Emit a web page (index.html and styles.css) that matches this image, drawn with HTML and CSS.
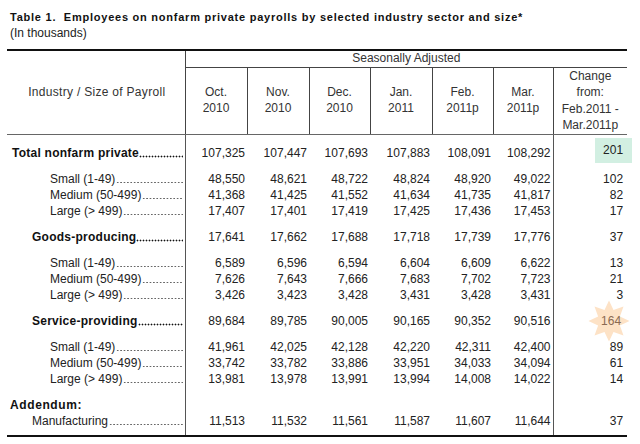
FILE: index.html
```html
<!DOCTYPE html>
<html>
<head>
<meta charset="utf-8">
<link rel="stylesheet" href="styles.css">
</head>
<body>
<div class="page">
  <h1 class="title">Table 1.&nbsp; Employees on nonfarm private payrolls by selected industry sector and size*</h1>
  <p class="sub">(In thousands)</p>
  <table class="data">
    <colgroup>
      <col class="c-label"><col class="c-62"><col class="c-62"><col class="c-61"><col class="c-62"><col class="c-61"><col class="c-60"><col class="c-chg">
    </colgroup>
    <thead>
      <tr class="h1">
        <th rowspan="2" class="lab-h">Industry / Size of Payroll</th>
        <th colspan="7" class="sa">Seasonally Adjusted</th>
      </tr>
      <tr class="h2">
        <th>Oct.<br>2010</th><th>Nov.<br>2010</th><th>Dec.<br>2010</th><th>Jan.<br>2011</th><th>Feb.<br>2011p</th><th>Mar.<br>2011p</th>
        <th class="chg">Change<br>from:<br>Feb.2011 -<br>Mar.2011p</th>
      </tr>
    </thead>
    <tbody>
      <tr class="gap"><td class="lab b l0"><span class="lw"><span>Total nonfarm private</span><span class="lead lead-b"></span></span></td><td>107,325</td><td>107,447</td><td>107,693</td><td>107,883</td><td>108,091</td><td class="last">108,292</td><td class="chg"><span class="hl-green">201</span></td></tr>
      <tr class="gap"><td class="lab l2"><span class="lw"><span>Small (1-49)</span><span class="lead"></span></span></td><td>48,550</td><td>48,621</td><td>48,722</td><td>48,824</td><td>48,920</td><td class="last">49,022</td><td class="chg">102</td></tr>
      <tr><td class="lab l2"><span class="lw"><span>Medium (50-499)</span><span class="lead"></span></span></td><td>41,368</td><td>41,425</td><td>41,552</td><td>41,634</td><td>41,735</td><td class="last">41,817</td><td class="chg">82</td></tr>
      <tr><td class="lab l2"><span class="lw"><span>Large (&gt; 499)</span><span class="lead"></span></span></td><td>17,407</td><td>17,401</td><td>17,419</td><td>17,425</td><td>17,436</td><td class="last">17,453</td><td class="chg">17</td></tr>
      <tr class="gap"><td class="lab b l1"><span class="lw"><span>Goods-producing</span><span class="lead lead-b"></span></span></td><td>17,641</td><td>17,662</td><td>17,688</td><td>17,718</td><td>17,739</td><td class="last">17,776</td><td class="chg">37</td></tr>
      <tr class="gap"><td class="lab l2"><span class="lw"><span>Small (1-49)</span><span class="lead"></span></span></td><td>6,589</td><td>6,596</td><td>6,594</td><td>6,604</td><td>6,609</td><td class="last">6,622</td><td class="chg">13</td></tr>
      <tr><td class="lab l2"><span class="lw"><span>Medium (50-499)</span><span class="lead"></span></span></td><td>7,626</td><td>7,643</td><td>7,666</td><td>7,683</td><td>7,702</td><td class="last">7,723</td><td class="chg">21</td></tr>
      <tr><td class="lab l2"><span class="lw"><span>Large (&gt; 499)</span><span class="lead"></span></span></td><td>3,426</td><td>3,423</td><td>3,428</td><td>3,431</td><td>3,428</td><td class="last">3,431</td><td class="chg">3</td></tr>
      <tr class="gap"><td class="lab b l1"><span class="lw"><span>Service-providing</span><span class="lead lead-b"></span></span></td><td>89,684</td><td>89,785</td><td>90,005</td><td>90,165</td><td>90,352</td><td class="last">90,516</td><td class="chg"><span class="star-wrap"><svg class="star" viewBox="-21 -21 42 42" width="42" height="42"><polygon points="0,-20.5 4.5,-10.9 14.5,-14.5 10.9,-4.5 20.5,0 10.9,4.5 14.5,14.5 4.5,10.9 0,20.5 -4.5,10.9 -14.5,14.5 -10.9,4.5 -20.5,0 -10.9,-4.5 -14.5,-14.5 -4.5,-10.9" fill="#fde2c6"/></svg><span class="star-num">164</span></span></td></tr>
      <tr class="gap"><td class="lab l2"><span class="lw"><span>Small (1-49)</span><span class="lead"></span></span></td><td>41,961</td><td>42,025</td><td>42,128</td><td>42,220</td><td>42,311</td><td class="last">42,400</td><td class="chg">89</td></tr>
      <tr><td class="lab l2"><span class="lw"><span>Medium (50-499)</span><span class="lead"></span></span></td><td>33,742</td><td>33,782</td><td>33,886</td><td>33,951</td><td>34,033</td><td class="last">34,094</td><td class="chg">61</td></tr>
      <tr><td class="lab l2"><span class="lw"><span>Large (&gt; 499)</span><span class="lead"></span></span></td><td>13,981</td><td>13,978</td><td>13,991</td><td>13,994</td><td>14,008</td><td class="last">14,022</td><td class="chg">14</td></tr>
      <tr class="gap"><td class="lab b wide la">Addendum:</td><td></td><td></td><td></td><td></td><td></td><td class="last"></td><td class="chg"></td></tr>
      <tr class="end"><td class="lab l1"><span class="lw"><span>Manufacturing</span><span class="lead"></span></span></td><td>11,513</td><td>11,532</td><td>11,561</td><td>11,587</td><td>11,607</td><td class="last">11,644</td><td class="chg">37</td></tr>
    </tbody>
  </table>
</div>
</body>
</html>
```

FILE: styles.css
```css
html, body {
  margin: 0;
  padding: 0;
  background: #ffffff;
}

body {
  font-family: "Liberation Sans", Arial, sans-serif;
  color: #222222;
}

.page {
  padding: 10px 0 0 7px;
}

.title {
  margin: 0 0 0 3px;
  font-size: 11px;
  line-height: 14px;
  font-weight: bold;
  letter-spacing: 0.76px;
  color: #111111;
}

.sub {
  margin: 2px 0 0 3px;
  font-size: 12px;
  line-height: 14px;
  color: #222222;
}

.data {
  margin-top: 9px;
  width: 620px;
  table-layout: fixed;
  border-collapse: collapse;
  font-size: 12px;
}

.c-label { width: 178px; }
.c-62 { width: 62px; }
.c-61 { width: 61px; }
.c-60 { width: 60px; }
.c-chg { width: 74px; }

.data th {
  font-weight: normal;
  color: #333333;
  padding: 0;
  line-height: 15.5px;
}

.h1 th {
  border-top: 2px solid #111111;
}

.data .lab-h {
  border-right: 1px solid #444444;
  border-bottom: 1px solid #666666;
  vertical-align: middle;
  padding-left: 2px;
  letter-spacing: 0.3px;
}

.sa {
  height: 14px;
  border-bottom: 1px solid #444444;
  line-height: 14px;
}

.h2 th {
  height: 64px;
  border-right: 1px solid #444444;
  border-bottom: 1px solid #666666;
  vertical-align: middle;
}

.h2 th.chg {
  border-right: none;
  line-height: 16.5px;
}

.data td {
  height: 16px;
  line-height: 16px;
  padding: 0 2px 0 0;
  text-align: right;
  white-space: nowrap;
  vertical-align: bottom;
}

.data td.chg {
  padding-right: 4px;
  position: relative;
}

.data td.last {
  border-right: 1px solid #555555;
}

.data td.lab {
  text-align: left;
  border-right: 1px solid #555555;
  padding-right: 2px;
}

.data .gap td {
  padding-top: 10px;
}

.data .end td {
  padding-bottom: 6px;
  border-bottom: 2px solid #111111;
}

.b {
  font-weight: bold;
  letter-spacing: 0.25px;
  color: #111111;
}

.b.wide {
  letter-spacing: 0.6px;
}

.data td.l0 { padding-left: 5px; }
.data td.l1 { padding-left: 25px; }
.data td.l2 { padding-left: 43px; }
.data td.la { padding-left: 3px; }

.lw {
  display: flex;
  align-items: baseline;
}

.lead {
  flex: 1;
  align-self: stretch;
  margin-left: 1px;
  background-image: radial-gradient(circle, #666666 0.6px, rgba(255,255,255,0) 0.9px);
  background-size: 3.4px 3px;
  background-repeat: repeat-x;
  background-position: left bottom 3px;
}

.lead-b {
  background-image: radial-gradient(circle, #111111 0.8px, rgba(255,255,255,0) 1.1px);
  background-size: 3px 3px;
  margin-left: 0;
}

.hl-green {
  position: absolute;
  right: -5px;
  bottom: -2px;
  width: 37px;
  height: 25px;
  background: #d2efe2;
  text-align: right;
  padding-right: 9px;
  box-sizing: border-box;
  line-height: 25px;
  color: #222222;
}

.star-wrap {
  position: relative;
  display: inline-block;
  margin-right: 2px;
}

.star {
  position: absolute;
  left: 50%;
  top: 50%;
  margin-left: -23px;
  margin-top: -21px;
}

.star-num {
  position: relative;
  color: #8a6a52;
}
```
